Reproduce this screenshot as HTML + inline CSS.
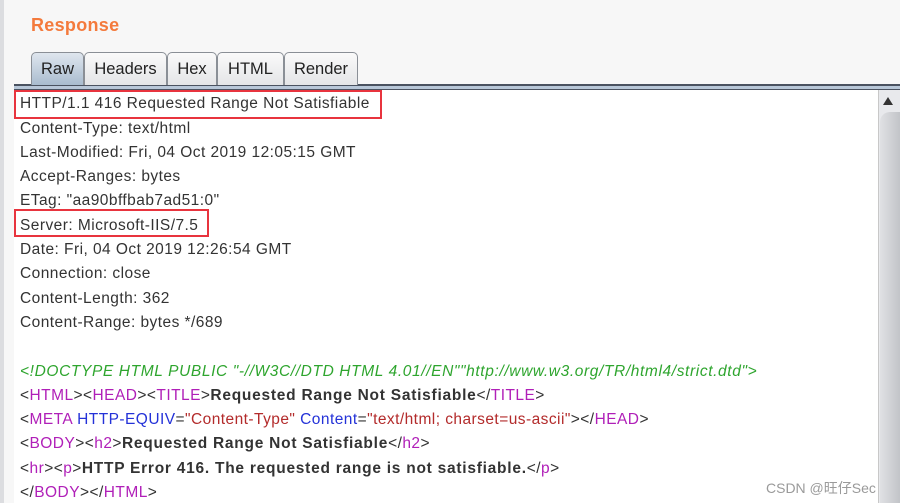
<!DOCTYPE html><html style="overflow:hidden"><head><style>
html,body{margin:0;width:900px;height:503px;overflow:hidden}
body{background:#f7f7f7;position:relative;font-family:"Liberation Sans","Noto Sans CJK SC",sans-serif}
.l{position:absolute;left:0;top:0;width:4px;height:503px;background:#dcdde0}
.t{position:absolute;left:31px;top:15px;color:#f47a3c;font-weight:bold;font-size:18px;letter-spacing:0.3px}
.tab{position:absolute;top:52px;height:33px;box-sizing:border-box;border:1px solid #8a8f96;border-bottom:none;border-radius:5px 5px 0 0;background:linear-gradient(#fafafa,#e4e5e7);font-size:16.5px;color:#222;text-align:center;line-height:33px}
.sel{background:linear-gradient(#dfe6ee,#a9bccf)}
.bar{position:absolute;left:14px;right:0;top:84px;height:6px;background:#b8c7d8;border-top:2px solid #4a5260;border-bottom:1px solid #4a5260;box-sizing:border-box}
.pane{position:absolute;left:14px;top:90px;width:864px;bottom:0;background:#fff}
.sb{position:absolute;left:878px;top:90px;right:0;bottom:0;background:#e8e9ec;border-left:1px solid #c8c8c8}
.th{position:absolute;left:880px;top:112px;width:20px;height:391px;background:linear-gradient(90deg,#e0e1e4,#c2c4c8);border-radius:10px 0 0 0}
.ln{position:absolute;left:20px;font-size:15.5px;letter-spacing:0.45px;color:#333;white-space:nowrap}
.ln b{letter-spacing:0.75px}
.g{color:#2ea52e;font-style:italic}.m{color:#b01fb8}.b{color:#2432d8}.r{color:#b32b2b}
.box{position:absolute;border:2.5px solid #e8343e;box-sizing:border-box}
.wm{position:absolute;left:766px;top:478px;font-size:14px;color:#9a9a9a}
</style></head><body>
<div class="l"></div>
<div class="t">Response</div>
<div class="bar"></div>
<div class="tab sel" style="left:31px;width:53px">Raw</div>
<div class="tab" style="left:84px;width:83px">Headers</div>
<div class="tab" style="left:167px;width:50px">Hex</div>
<div class="tab" style="left:217px;width:67px">HTML</div>
<div class="tab" style="left:284px;width:74px">Render</div>
<div class="pane"></div>
<div class="sb"></div><div class="th"></div>
<div style="position:absolute;left:883px;top:97px;width:0;height:0;border-left:5px solid transparent;border-right:5px solid transparent;border-bottom:8px solid #333"></div>
<div class="ln" style="top:95px">HTTP/1.1 416 Requested Range Not Satisfiable</div>
<div class="ln" style="top:120px">Content-Type: text/html</div>
<div class="ln" style="top:144px">Last-Modified: Fri, 04 Oct 2019 12:05:15 GMT</div>
<div class="ln" style="top:168px">Accept-Ranges: bytes</div>
<div class="ln" style="top:192px">ETag: "aa90bffbab7ad51:0"</div>
<div class="ln" style="top:217px">Server: Microsoft-IIS/7.5</div>
<div class="ln" style="top:241px">Date: Fri, 04 Oct 2019 12:26:54 GMT</div>
<div class="ln" style="top:265px">Connection: close</div>
<div class="ln" style="top:290px">Content-Length: 362</div>
<div class="ln" style="top:314px">Content-Range: bytes */689</div>
<div class="ln g" style="top:363px;letter-spacing:0.62px">&lt;!DOCTYPE HTML PUBLIC "-//W3C//DTD HTML 4.01//EN""http://www.w3.org/TR/html4/strict.dtd"&gt;</div>
<div class="ln" style="top:387px">&lt;<span class="m">HTML</span>&gt;&lt;<span class="m">HEAD</span>&gt;&lt;<span class="m">TITLE</span>&gt;<b>Requested Range Not Satisfiable</b>&lt;/<span class="m">TITLE</span>&gt;</div>
<div class="ln" style="top:411px">&lt;<span class="m">META</span> <span class="b">HTTP-EQUIV</span>=<span class="r">"Content-Type"</span> <span class="b">Content</span>=<span class="r">"text/html; charset=us-ascii"</span>&gt;&lt;/<span class="m">HEAD</span>&gt;</div>
<div class="ln" style="top:435px">&lt;<span class="m">BODY</span>&gt;&lt;<span class="m">h2</span>&gt;<b>Requested Range Not Satisfiable</b>&lt;/<span class="m">h2</span>&gt;</div>
<div class="ln" style="top:460px">&lt;<span class="m">hr</span>&gt;&lt;<span class="m">p</span>&gt;<b>HTTP Error 416. The requested range is not satisfiable.</b>&lt;/<span class="m">p</span>&gt;</div>
<div class="ln" style="top:484px">&lt;/<span class="m">BODY</span>&gt;&lt;/<span class="m">HTML</span>&gt;</div>
<div class="box" style="left:14px;top:90px;width:368px;height:29px"></div>
<div class="box" style="left:14px;top:209px;width:195px;height:28px"></div>
<div class="wm">CSDN @旺仔Sec</div>
</body></html>
